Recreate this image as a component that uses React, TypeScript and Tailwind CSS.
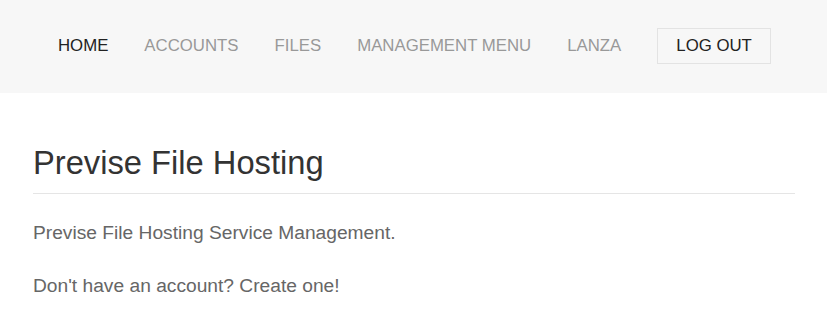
import React from 'react';

const links = ['ACCOUNTS', 'FILES', 'MANAGEMENT MENU', 'LANZA'];

const App = () => {
  return (
    <div className="min-h-screen bg-white font-['Liberation_Sans',Arial,sans-serif]">
      {/* Nav */}
      <header className="h-[93px] bg-[#f7f7f7] flex items-center pl-[40px]">
        <nav className="flex items-center text-[16.8px] -mt-[2px]">
          <a className="px-[18px] text-[#222]">HOME</a>
          {links.map((l) => (
            <a key={l} className="px-[18px] text-[#999]">
              {l}
            </a>
          ))}
          <a className="ml-[18px] px-[18px] h-[36px] flex items-center border border-[#e3e3e3] text-[#222]">
            LOG OUT
          </a>
        </nav>
      </header>

      {/* Main Content */}
      <main className="px-[33px] pt-[50px]">
        <h1 className="text-[32.7px] leading-[40px] text-[#333] pb-[10px] border-b border-[#e5e5e5] w-[762px]">
          Previse File Hosting
        </h1>
        <p className="mt-[26px] text-[19.2px] leading-[26px] text-[#666]">
          Previse File Hosting Service Management.
        </p>
        <p className="mt-[27px] text-[19.2px] leading-[26px] text-[#666]">
          Don't have an account? Create one!
        </p>
      </main>
    </div>
  );
};

export default App;
